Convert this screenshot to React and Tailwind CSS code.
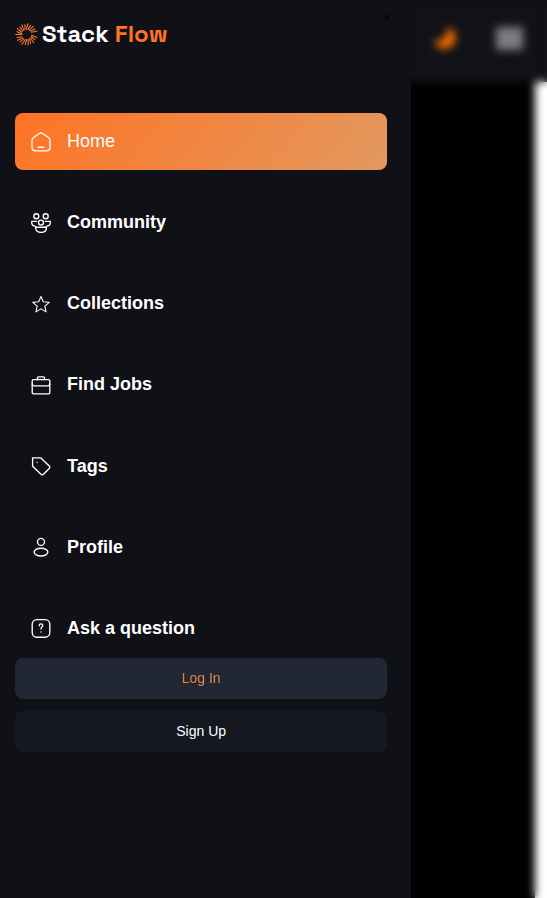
import { X } from "lucide-react";

function Icon({ children }) {
  return (
    <svg
      viewBox="0 0 20 20"
      className="size-5 shrink-0"
      fill="none"
      stroke="currentColor"
      strokeWidth="1.35"
      strokeLinecap="round"
      strokeLinejoin="round"
      aria-hidden="true"
    >
      {children}
    </svg>
  );
}

const HomeIcon = (
  <Icon>
    <path d="M8.4 1.500 2.900 5.200C1.800 6 1 7.300 1 8.600v6.400c0 2.400 1.500 3.900 3.800 3.900h10.400c2.300 0 3.800-1.500 3.800-3.900V8.600c0-1.300-.8-2.600-1.900-3.400L11.600 1.500c-1-.7-2.200-.7-3.200 0Z" />
    <path d="M7.200 15.200h5.600" />
  </Icon>
);

const CommunityIcon = (
  <Icon>
    <circle cx="5.300" cy="3.200" r="2.500" />
    <circle cx="14.700" cy="3.200" r="2.500" />
    <circle cx="10" cy="9.600" r="2.500" />
    <path d="M5.600 8.400H.700v.9c0 2.300 1.700 3.900 4 4" />
    <path d="M14.400 8.400h4.900v.9c0 2.300-1.700 3.900-4 4" />
    <path d="M4.600 14.200h10.800v.9c0 2.600-2.200 4.300-5.400 4.300s-5.400-1.700-5.400-4.300Z" />
  </Icon>
);

const StarIcon = (
  <Icon>
    <path
      strokeWidth="1.1"
      d="m10 2.500 2.300 5.300 5.900.5-4.400 3.900 1.300 5.700L10 14.900l-5.100 3 1.300-5.700-4.400-3.900 5.900-.5Z"
    />
  </Icon>
);

const BriefcaseIcon = (
  <Icon>
    <rect x="1.200" y="4.600" width="17.600" height="14.300" rx="1.300" />
    <path d="M6.500 4.600V2.800c0-.6.4-1 1-1h5c.6 0 1 .4 1 1v1.800" />
    <path d="M1.200 8.800c0 1.400.8 2 2 2h13.600c1.200 0 2-.6 2-2" />
  </Icon>
);

const TagIcon = (
  <Icon>
    <path d="M1.600 1.800h8l8.400 8c1.100 1.100 1.100 2 0 3l-5.300 5.300c-1 1-2 1-3 0L1.600 10.300Z" />
    <circle cx="6" cy="6.300" r=".4" strokeWidth=".5" />
  </Icon>
);

const ProfileIcon = (
  <Icon>
    <circle cx="10" cy="4.900" r="3.500" />
    <ellipse cx="10" cy="15.100" rx="6.900" ry="3.900" />
  </Icon>
);

const QuestionIcon = (
  <Icon>
    <rect x="1.200" y="1.600" width="17.600" height="17.600" rx="4.600" />
    <path d="M8.300 7.700c0-1 .7-1.800 1.700-1.800s1.700.7 1.700 1.700c0 1.500-1.700 1.600-1.700 3.300" />
    <path d="M10 13.800v.2" />
  </Icon>
);

const links = [
  { label: "Home", icon: HomeIcon, active: true },
  { label: "Community", icon: CommunityIcon },
  { label: "Collections", icon: StarIcon },
  { label: "Find Jobs", icon: BriefcaseIcon },
  { label: "Tags", icon: TagIcon },
  { label: "Profile", icon: ProfileIcon },
  { label: "Ask a question", icon: QuestionIcon },
];

const rays = Array.from({ length: 22 }, (_, i) => {
  const a = (i * Math.PI) / 11 + Math.PI;
  const b = i === 0 ? a : a - 0.2;
  const inner = i === 0 ? 4 : 5;
  const outer = i % 2 ? 10.8 : 11.7;
  return {
    x1: 12 + inner * Math.cos(b),
    y1: 12 + inner * Math.sin(b),
    x2: 12 + outer * Math.cos(a),
    y2: 12 + outer * Math.sin(a),
  };
}).filter((_, i) => i !== 11);

function Logo() {
  return (
    <a href="#" className="flex items-center gap-1">
      <svg
        viewBox="0 0 24 24"
        className="size-[23px] shrink-0"
        stroke="#ff7a2a"
        strokeWidth="1.1"
        aria-hidden="true"
      >
        {rays.map((r, i) => (
          <line key={i} {...r} />
        ))}
      </svg>
      <span className="font-['Space_Grotesk',Inter,sans-serif] text-2xl leading-8 font-bold text-white">
        Stack <span className="text-[#ff7323]">Flow</span>
      </span>
    </a>
  );
}

function Drawer() {
  return (
    <aside className="fixed inset-y-0 left-0 w-[calc(75%+1px)] overflow-y-auto bg-[#101116] pt-[18px] pr-6 pl-[15px]">
      <Logo />
      <nav className="mt-[63px] flex min-h-[544px] flex-col justify-between">
        {links.map(({ label, icon, active }) => (
          <a
            key={label}
            href="#"
            className={
              active
                ? "flex items-center gap-4 rounded-lg bg-[linear-gradient(129deg,#ff7324_0%,#e2995f_100%)] p-4 text-lg leading-[25px] text-white"
                : "flex items-center gap-4 rounded-lg p-4 text-lg leading-[25px] font-bold text-white"
            }
          >
            {icon}
            <span>{label}</span>
          </a>
        ))}
      </nav>
      <div className="mt-px flex flex-col gap-3 text-sm leading-5">
        <button type="button" className="h-[41px] rounded-lg bg-[#212734] px-4 pb-0.5">
          <span className="bg-[linear-gradient(129deg,#ff7324_0%,#e2995f_100%)] bg-clip-text text-transparent">
            Log In
          </span>
        </button>
        <button type="button" className="h-[41px] rounded-lg bg-[#151821] px-4 pb-0.5 text-white">
          Sign Up
        </button>
      </div>
      <button type="button" aria-label="Close" className="absolute top-2.5 right-4 text-black">
        <X className="size-4" strokeWidth={1.5} />
      </button>
    </aside>
  );
}

export default function App() {
  return (
    <div className="flex min-h-screen flex-col bg-black font-['Liberation_Sans',Arial,sans-serif]">
      <header className="flex h-[82px] items-center justify-end gap-[34px] bg-[#101217] pr-5 pb-1.5">
        <button type="button" aria-label="Theme">
          <svg viewBox="0 0 24 24" className="size-6" fill="#ff7000" aria-hidden="true">
            <path d="M14.500 1a11.200 11.200 0 1 1-14 13.500c4.500 1.500 8 .5 10.500-2.500 2.500-2.500 4-6.500 3.500-11Z" />
          </svg>
        </button>
        <button type="button" aria-label="Menu" className="flex size-9 items-center justify-center">
          <span className="h-[23px] w-[27px] bg-[#7c7d80]" />
        </button>
      </header>
      <main className="flex flex-1">
        <div className="flex-1 bg-black" />
        <div className="w-3 bg-white" />
      </main>
      <div className="fixed inset-0 backdrop-blur-xs" />
      <Drawer />
    </div>
  );
}
